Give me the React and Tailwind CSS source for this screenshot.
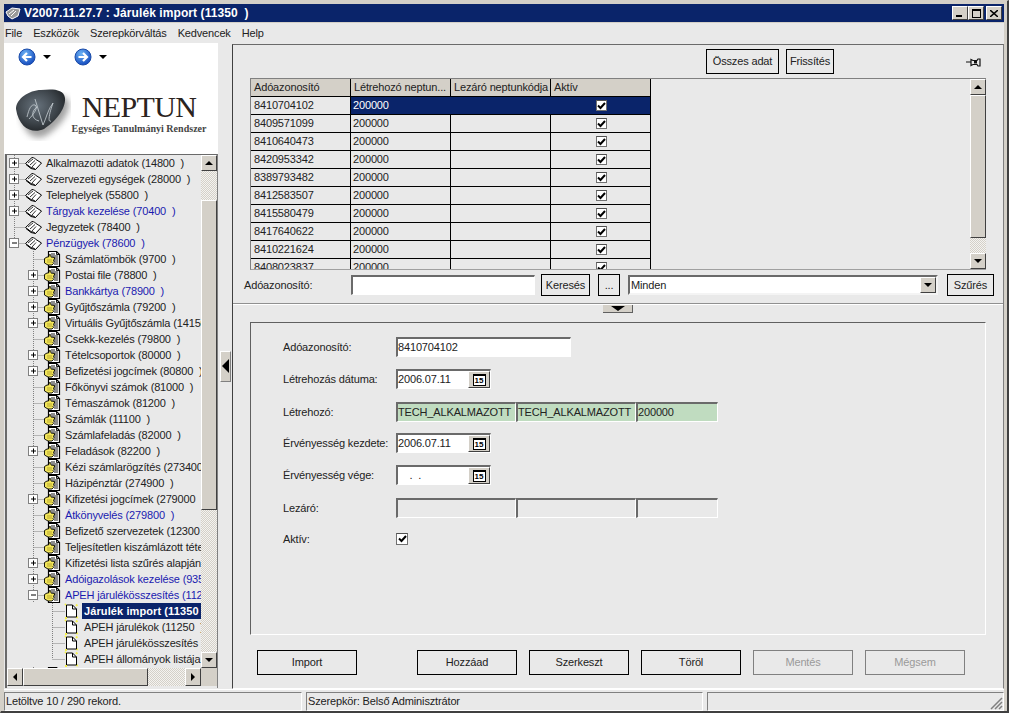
import React from "react";

const tree = [
  [0, "+", "Alkalmazotti adatok (14800  )"],
  [0, "+", "Szervezeti egységek (28000  )"],
  [0, "+", "Telephelyek (55800  )"],
  [0, "+", "Tárgyak kezelése (70400  )", "b"],
  [0, "", "Jegyzetek (78400  )"],
  [0, "-", "Pénzügyek (78600  )", "b"],
  [1, "", "Számlatömbök (9700  )"],
  [1, "+", "Postai file (78800  )"],
  [1, "+", "Bankkártya (78900  )", "b"],
  [1, "+", "Gyűjtőszámla (79200  )"],
  [1, "+", "Virtuális Gyűjtőszámla (14150  )"],
  [1, "", "Csekk-kezelés (79800  )"],
  [1, "+", "Tételcsoportok (80000  )"],
  [1, "+", "Befizetési jogcímek (80800  )"],
  [1, "", "Főkönyvi számok (81000  )"],
  [1, "", "Témaszámok (81200  )"],
  [1, "", "Számlák (11100  )"],
  [1, "", "Számlafeladás (82000  )"],
  [1, "+", "Feladások (82200  )"],
  [1, "", "Kézi számlarögzítés (273400  )"],
  [1, "", "Házipénztár (274900  )"],
  [1, "+", "Kifizetési jogcímek (279000  )"],
  [1, "", "Átkönyvelés (279800  )", "b"],
  [1, "", "Befizető szervezetek (12300  )"],
  [1, "", "Teljesítetlen kiszámlázott tételek"],
  [1, "+", "Kifizetési lista szűrés alapján"],
  [1, "+", "Adóigazolások kezelése (9350  )", "b"],
  [1, "-", "APEH járulékösszesítés (11200  )", "b"],
  [2, "", "Járulék import (11350  )", "s"],
  [2, "", "APEH járulékok (11250  )"],
  [2, "", "APEH járulékösszesítés (11300"],
  [2, "", "APEH állományok listája (11400"],
  [1, "-", "SEB jelentések (12050  )", "b"],
];

const rows = ["8410704102","8409571099","8410640473","8420953342","8389793482","8412583507","8415580479","8417640622","8410221624","8408023837"];

const Dots = ({ d }) => <path d={d} stroke="#808080" strokeWidth="1" strokeDasharray="1 1" fill="none" />;

function Box({ x, sign }) {
  return (
    <g>
      <rect x={x - 4.5} y="3.5" width="9" height="9" fill="#fff" stroke="#808080" />
      <path d={`M${x - 2} 8h5`} stroke="#000" />
      {sign === "+" && <path d={`M${x + 0.5} 5.5v5`} stroke="#000" />}
    </g>
  );
}

function Book({ x }) {
  return (
    <g transform={`translate(${x} 1)`}>
      <path d="M.5 7.5 7 1.5c2 .2 3 1 4 2l5.500 3.500-6 6.500c-1.500-1.500-4-2-4.500-2z" fill="#fff" stroke="#000" />
      <path d="M3 7l5-4M5 9l5-4.500M7 11l4-4.500" stroke="#000" strokeWidth=".8" fill="none" />
      <path d="M1 8.500 6 12.500l4.500 1" stroke="#000" fill="none" />
    </g>
  );
}

function HandDoc({ x }) {
  return (
    <g transform={`translate(${x} 0)`}>
      <path d="M4.500.5h8l3 3v12h-11z" fill="#fff" stroke="#000" strokeWidth="1.200" />
      <path d="M12.500.5v3h3M7 3h4M8 5h6M9 7h5M10 9h4M10 11h4M10 13h4" stroke="#000" strokeWidth=".9" fill="none" />
      <path d="M.5 7.500 3 6h1.500l1-2.500 1.500.5v2l3.500.5v1.500l-1 1 .5 1.500-1 1 .5 1-1.500 1.500H4l-3.500-2z" fill="#f2e65a" stroke="#000" strokeWidth=".9" />
      <path d="M3 9h5M3 11h5" stroke="#a08a20" strokeWidth=".7" />
    </g>
  );
}

function Page({ x }) {
  return (
    <g transform={`translate(${x} 0)`}>
      <path d="M13 1.500 15 3.500M13 14l3 1M2 2 3 1" stroke="#f5f04a" strokeWidth="2" strokeDasharray="2 1" />
      <path d="M1.500 2.500h6l4 4v8h-10z" transform="translate(2 -.5)" fill="#fff" stroke="#000" />
      <path d="M9.500 2v4h4" stroke="#000" fill="none" />
      <path d="M2 15h2" stroke="#f5f04a" strokeWidth="2" />
    </g>
  );
}

function Glyph({ level, sign, index }) {
  const w = [39, 58, 77][level];
  return (
    <svg width={w} height="16" className="shrink-0">
      <g transform="translate(-5 0)">
        {level === 0 && <Dots d={`M14.500 0V${index === 5 ? 8 : 16}M14.500 8.500H25`} />}
        {level === 1 && <Dots d="M33.500 0V16M33.500 8.500H45" />}
        {level === 2 && <Dots d={`M52.500 0V${index === 31 ? 8 : 16}M52.500 8.500H65`} />}
        {level === 0 && sign && <Box x={14} sign={sign} />}
        {level === 1 && sign && <Box x={33} sign={sign} />}
        {level === 0 && <Book x={25} />}
        {level === 1 && <HandDoc x={44} />}
        {level === 2 && <Page x={63} />}
      </g>
    </svg>
  );
}

const Tri = ({ dir = "down" }) => {
  const s = { up: "M0 4h8L4 0z", down: "M0 0h8L4 4z", left: "M4 0v8L0 4z", right: "M0 0v8l4-4z" }[dir];
  const w = dir === "up" || dir === "down" ? 8 : 4;
  const h = dir === "up" || dir === "down" ? 4 : 8;
  return <svg width={w} height={h}><path d={s} fill="#000" /></svg>;
};

const SB = ({ dir, className = "" }) => (
  <div className={`w-4 h-4 shrink-0 flex items-center justify-center bg-[#d4d0c8] border border-t-white border-l-white border-r-[#404040] border-b-[#404040] ${className}`}>
    <Tri dir={dir} />
  </div>
);

const Btn = ({ children, w, h = "h-[23px]", off }) => (
  <div className={`${w} ${h} shrink-0 flex items-center justify-center border ${off ? "border-[#808080] text-[#9a9a9a]" : "border-black text-[#222]"}`}>{children}</div>
);

const Field = ({ w, children, bg = "bg-white" }) => (
  <div className={`${w} h-5 ${bg} shrink-0 border-t-2 border-l-2 border-t-[#6a6a6a] border-l-[#6a6a6a] border-b border-r border-b-white border-r-white leading-[17px] overflow-hidden whitespace-pre`}>{children}</div>
);

const Cal = () => (
  <div className="w-[22px] h-full flex items-center justify-center bg-[#d4d0c8] border border-t-white border-l-white border-r-[#404040] border-b-[#404040]">
    <div className="w-[13px] h-[12px] border border-black border-t-2 bg-white text-[8px] font-bold leading-[9px] text-center text-black tracking-normal">15</div>
  </div>
);

const DateField = ({ value }) => (
  <div className="w-[95px] h-5 flex bg-white border-t-2 border-l-2 border-t-[#6a6a6a] border-l-[#6a6a6a] border-b border-r border-b-white border-r-white">
    <div className="flex-1 leading-[17px] whitespace-pre">{value}</div>
    <Cal />
  </div>
);

const Check = ({ size = "w-[11px] h-[11px]" }) => (
  <div className={`${size} bg-white border border-[#707070] border-t-[#505050] flex items-center justify-center`}>
    <svg width="9" height="8" viewBox="0 0 9 8"><path d="M1 3.500 3.500 6 8 1" stroke="#000" strokeWidth="2" fill="none" /></svg>
  </div>
);

const FormRow = ({ label, mt, children }) => (
  <div className={`flex items-center h-5 ${mt}`}>
    <div className="w-[113px] pl-[32px] box-content shrink-0 whitespace-nowrap">{label}</div>
    {children}
  </div>
);

const dither = "bg-[repeating-conic-gradient(#d4d0c8_0_25%,#f4f3f0_0_50%)] bg-[length:2px_2px]";

function Stone() {
  return (
    <svg width="58" height="54" viewBox="0 0 58 54" className="shrink-0">
      <defs>
        <radialGradient id="st" cx=".42" cy=".4" r=".75">
          <stop offset="0" stopColor="#67727c" />
          <stop offset=".55" stopColor="#3d444a" />
          <stop offset="1" stopColor="#16181a" />
        </radialGradient>
        <filter id="bl"><feGaussianBlur stdDeviation="3" /></filter>
      </defs>
      <path d="M6 26C5 14 18 6 30 6c9-1 24-2 24 6 1 11-10 24-22 32-10 6-22 2-26-18z" fill="#555" opacity=".55" filter="url(#bl)" transform="translate(2 4)" />
      <path d="M3 22C3 12 16 3 28 3c9-1 23-2 24 8 1 11-10 24-21 31-11 5-25 0-28-20z" fill="url(#st)" />
      <path d="M14 30c2-8 4-13 8-12 4 2-2 10-6 14M22 12l8 26c3-6 5-16 10-22-3 8-6 20-2 18M24 20c-6 4-6 12 2 14" stroke="#c8cfd4" strokeWidth="1" fill="none" opacity=".8" />
    </svg>
  );
}

const Nav = ({ back }) => (
  <div className="flex items-center gap-[7px]">
    <svg width="18" height="18" viewBox="0 0 18 18">
      <defs>
        <radialGradient id={back ? "nb" : "nf"} cx=".4" cy=".3" r=".8">
          <stop offset="0" stopColor="#6db4f5" /><stop offset="1" stopColor="#0a3fb8" />
        </radialGradient>
      </defs>
      <circle cx="9" cy="9" r="8" fill={`url(#${back ? "nb" : "nf"})`} stroke="#1a4aa8" />
      <path d={back ? "M13.500 9H6M9 5 5 9l4 4" : "M4.500 9H12M9 5l4 4-4 4"} stroke="#fff" strokeWidth="2.200" fill="none" />
    </svg>
    <Tri dir="down" />
  </div>
);

export default function App() {
  return (
    <div className="w-[1009px] h-[713px] flex flex-col bg-[#d4d0c8] border-t border-l border-r-2 border-b-2 border-t-[#d4d0c8] border-l-[#d4d0c8] border-r-[#404040] border-b-[#404040] overflow-hidden text-[11px] tracking-[-0.15px] text-[#222] font-['Liberation_Sans',Arial,sans-serif]">
      <div className="mx-[3px] mt-[3px] h-[18px] bg-[#0a246a] flex items-center shrink-0 text-white pl-[1px]">
        <svg width="17" height="15" viewBox="0 0 17 15" className="shrink-0 mr-[2px]">
          <path d="M1 6 7 2l8 1-2 7-6 3-4-3z" fill="#9a9a9a" stroke="#fff" />
          <path d="M4 8l5-4M6 10l5-5" stroke="#fff" />
        </svg>
        <span className="font-bold text-[12px] tracking-[0.08px] whitespace-pre">V2007.11.27.7 : Járulék import (11350  )</span>
        <div className="ml-auto flex mr-[2px]">
          {["min", "max", "x"].map((k) => (
            <div key={k} className={`w-4 h-[14px] bg-[#d4d0c8] border border-t-white border-l-white border-r-[#404040] border-b-[#404040] flex items-center justify-center ${k === "x" ? "ml-[2px]" : ""}`}>
              {k === "min" && <div className="w-[6px] h-[2px] bg-black mt-[6px] -ml-[2px]" />}
              {k === "max" && <div className="w-[9px] h-[9px] border border-black border-t-2" />}
              {k === "x" && <svg width="8" height="7"><path d="M0 0l8 7M8 0 0 7" stroke="#000" strokeWidth="1.500" /></svg>}
            </div>
          ))}
        </div>
      </div>
      <div className="mx-[3px] h-[21px] shrink-0 bg-[#e9e9e9] flex items-center gap-[11px] pl-[1px] border-t border-t-[#d4d0c8]">
        {["File", "Eszközök", "Szerepkörváltás", "Kedvencek", "Help"].map((m) => <span key={m}>{m}</span>)}
      </div>
      <div className="mx-[3px] flex-1 min-h-0 flex bg-[#e9e9e9]">
        <div className="w-[214px] shrink-0 flex flex-col">
          <div className="h-[111px] shrink-0 bg-white flex flex-col">
            <div className="flex pl-[14px] pt-[5px] gap-[23px]"><Nav back /><Nav /></div>
            <div className="flex items-center pl-[9px] mt-[21px]">
              <Stone />
              <div className="w-[138px] -ml-[1px] flex flex-col items-center text-[#2a2320] tracking-normal font-['Liberation_Serif',serif]">
                <span className="text-[30px] leading-[29px] tracking-[-0.6px]">NEPTUN</span>
                <span className="text-[10px] leading-[14px] font-bold tracking-[0.02px] whitespace-nowrap mt-[1px] text-[#444]">Egységes Tanulmányi Rendszer</span>
              </div>
            </div>
          </div>
          <div className="flex-1 min-h-0 ml-[1px] mb-[1px] border-t border-l-2 border-t-[#6a6a6a] border-l-[#6a6a6a] border-r border-r-[#808080] flex flex-col">
            <div className="flex-1 min-h-0 flex">
              <div className="flex-1 min-w-0 overflow-hidden flex flex-col">
                {tree.map(([lvl, sign, text, kind], i) => (
                  <div key={i} className="h-4 shrink-0 flex items-center whitespace-pre -ml-[2px]">
                    <Glyph level={lvl} sign={sign} index={i} />
                    <span className={`leading-4 px-[2px] ${kind === "b" ? "text-[#1a1ab0]" : ""} ${kind === "s" ? "flex-1 bg-[#0a246a] text-white font-bold tracking-[0.1px]" : ""}`}>{text}</span>
                  </div>
                ))}
              </div>
              <div className={`w-4 shrink-0 flex flex-col ${dither}`}>
                <SB dir="up" />
                <div className="h-[29px] shrink-0" />
                <div className="h-[310px] shrink-0 bg-[#d4d0c8] border border-t-white border-l-white border-r-[#404040] border-b-[#404040]" />
                <div className="flex-1" />
                <SB dir="down" />
              </div>
            </div>
            <div className={`h-[18px] shrink-0 flex items-stretch ${dither}`}>
              <SB dir="left" className="!h-[18px]" />
              <div className="w-[125px] bg-[#d4d0c8] border border-t-white border-l-white border-r-[#404040] border-b-[#404040]" />
              <div className="flex-1" />
              <SB dir="right" className="!h-[18px]" />
              <div className="w-4 bg-[#d4d0c8]" />
            </div>
            <div className="h-[2px] shrink-0 bg-[#e9e9e9]" />
          </div>
        </div>
        <div className="w-[14px] shrink-0 flex items-center justify-center">
          <div className="w-[11px] h-[31px] bg-[#d4d0c8] border border-t-white border-l-white border-r-[#808080] border-b-[#808080] flex items-center justify-center">
            <svg width="7" height="14"><path d="M7 0v14L0 7z" fill="#000" /></svg>
          </div>
        </div>
        <div className="flex-1 min-w-0 flex flex-col border border-t-[#6a6a6a] border-l-[#404040] border-r-[#808080] border-b-white mt-[1px]">
          <div className="h-[33px] shrink-0 flex items-center justify-end">
            <Btn w="w-[73px]" h="h-[25px]">Összes adat</Btn>
            <div className="w-[7px]" />
            <Btn w="w-[48px]" h="h-[25px]">Frissítés</Btn>
            <div className="w-[169px] flex justify-end pr-[22px]">
              <svg width="15" height="10" viewBox="0 0 15 10"><path d="M0 5h5M5 2.500l2 1h4l1-1.500h2v7h-2l-1-1.500H7l-2 1z" fill="none" stroke="#111" strokeWidth="1.200" /><path d="M8 3.500h3v3H8z" fill="#111" /></svg>
            </div>
          </div>
          <div className="mx-[17px] h-[192px] shrink-0 flex border-t border-l border-b border-t-[#808080] border-l-[#808080] border-b-[#a0a0a0]">
            <div className="w-[400px] shrink-0 overflow-hidden flex flex-col">
              <div className="h-[18px] shrink-0 flex bg-[#d4d0c8] border-b border-b-black">
                {["Adóazonosító", "Létrehozó neptun...", "Lezáró neptunkódja", "Aktív"].map((h) => (
                  <div key={h} className="w-[100px] shrink-0 border-r border-r-black pl-[3px] leading-[17px] whitespace-nowrap overflow-hidden">{h}</div>
                ))}
              </div>
              {rows.map((r, i) => (
                <div key={r} className="h-[18px] shrink-0 flex border-b border-b-black">
                  <div className="w-[100px] shrink-0 border-r border-r-black pl-[3px] leading-[17px]">{r}</div>
                  <div className={`w-[100px] shrink-0 border-r pl-[2px] leading-[17px] ${i === 0 ? "bg-[#0a246a] text-white border-r-[#0a246a]" : "border-r-black"}`}>200000</div>
                  <div className={`w-[100px] shrink-0 border-r ${i === 0 ? "bg-[#0a246a] border-r-[#0a246a]" : "border-r-black"}`} />
                  <div className={`w-[100px] shrink-0 border-r border-r-black flex items-center justify-center pl-[1px] ${i === 0 ? "bg-[#0a246a]" : ""}`}><Check /></div>
                </div>
              ))}
            </div>
            <div className="flex-1" />
            <div className={`w-4 shrink-0 flex flex-col ${dither}`}>
              <SB dir="up" />
              <div className="h-[143px] shrink-0 bg-[#d4d0c8] border border-t-white border-l-white border-r-[#404040] border-b-[#404040]" />
              <div className="flex-1" />
              <SB dir="down" />
            </div>
          </div>
          <div className="h-[22px] mt-[4px] shrink-0 flex items-center pl-[11px]">
            <div className="w-[107px] shrink-0">Adóazonosító:</div>
            <Field w="w-[184px]" />
            <div className="w-[6px]" />
            <Btn w="w-[49px]" h="h-[22px]">Keresés</Btn>
            <div className="w-[8px]" />
            <Btn w="w-[22px]" h="h-[22px]">...</Btn>
            <div className="w-[8px]" />
            <div className="w-[310px] h-5 shrink-0 bg-white flex items-stretch border-t-2 border-l-2 border-t-[#6a6a6a] border-l-[#6a6a6a] border-r-2 border-b-2 border-r-[#f4f4f4] border-b-[#f4f4f4]">
              <div className="flex-1 pl-[1px] leading-[16px]">Minden</div>
              <div className="w-4 bg-[#d4d0c8] border border-t-white border-l-white border-r-[#404040] border-b-[#404040] flex items-center justify-center"><Tri dir="down" /></div>
            </div>
            <div className="w-[9px]" />
            <Btn w="w-[47px]" h="h-[22px]">Szűrés</Btn>
          </div>
          <div className="mt-[7px] h-[2px] shrink-0 border-t border-t-[#909090] border-b border-b-white" />
          <div className="h-[10px] shrink-0 flex pl-[370px]">
            <div className="w-[30px] h-[8px] bg-[#d4d0c8] border-b border-r border-b-[#606060] border-r-[#606060] flex items-center justify-center">
              <svg width="14" height="5"><path d="M0 0h14L7 5z" fill="#000" /></svg>
            </div>
          </div>
          <div className="mx-[17px] mt-[7px] h-[313px] shrink-0 flex flex-col border border-t-[#606060] border-l-[#606060] border-r-white border-b-white pt-[14px]">
            <FormRow label="Adóazonosító:"><Field w="w-[175px]">8410704102</Field></FormRow>
            <FormRow label="Létrehozás dátuma:" mt="mt-[12px]"><DateField value="2006.07.11" /></FormRow>
            <FormRow label="Létrehozó:" mt="mt-[13px]">
              <Field w="w-[120px]" bg="bg-[#c0dcc0]">TECH_ALKALMAZOTT</Field>
              <Field w="w-[120px]" bg="bg-[#c0dcc0]">TECH_ALKALMAZOTT</Field>
              <Field w="w-[82px]" bg="bg-[#c0dcc0]">200000</Field>
            </FormRow>
            <FormRow label="Érvényesség kezdete:" mt="mt-[11px]"><DateField value="2006.07.11" /></FormRow>
            <FormRow label="Érvényesség vége:" mt="mt-[12px]"><DateField value="    .  ." /></FormRow>
            <FormRow label="Lezáró:" mt="mt-[13px]">
              <Field w="w-[120px]" bg="bg-[#e9e9e9]" />
              <Field w="w-[120px]" bg="bg-[#e9e9e9]" />
              <Field w="w-[82px]" bg="bg-[#e9e9e9]" />
            </FormRow>
            <FormRow label="Aktív:" mt="mt-[11px]"><Check size="w-[12px] h-[12px]" /></FormRow>
          </div>
          <div className="mt-[15px] flex pl-[24px]">
            <Btn w="w-[100px]" h="h-[25px]">Import</Btn>
            <div className="w-[60px]" />
            <div className="flex gap-3">
              <Btn w="w-[100px]" h="h-[25px]">Hozzáad</Btn>
              <Btn w="w-[100px]" h="h-[25px]">Szerkeszt</Btn>
              <Btn w="w-[100px]" h="h-[25px]">Töröl</Btn>
              <Btn w="w-[100px]" h="h-[25px]" off>Mentés</Btn>
              <Btn w="w-[100px]" h="h-[25px]" off>Mégsem</Btn>
            </div>
          </div>
        </div>
      </div>
      <div className="mx-[3px] h-[22px] shrink-0 bg-[#e9e9e9] flex gap-[4px] pt-[2px] border-t border-t-white">
        <div className="w-[298px] border-t border-l border-t-[#808080] border-l-[#808080] border-b border-r border-b-white border-r-white pl-[1px] leading-[16px]">Letöltve 10 / 290 rekord.</div>
        <div className="w-[397px] border-t border-l border-t-[#808080] border-l-[#808080] border-b border-r border-b-white border-r-white pl-[1px] leading-[16px]">Szerepkör: Belső Adminisztrátor</div>
        <div className="flex-1 border-t border-l border-t-[#808080] border-l-[#808080] border-b border-r border-b-white border-r-white flex justify-end items-end">
          <svg width="13" height="13"><path d="M12 1 1 12M12 5 5 12M12 9l-3 3" stroke="#808080" strokeWidth="1.500" /></svg>
        </div>
      </div>
    </div>
  );
}
